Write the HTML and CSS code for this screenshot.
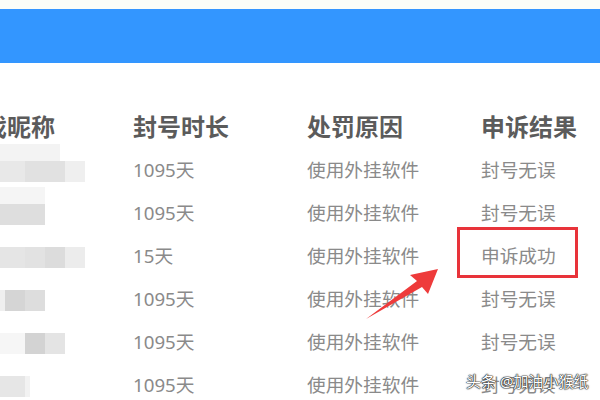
FILE: index.html
```html
<!DOCTYPE html>
<html lang="zh-CN">
<head>
    <meta charset="UTF-8" />
    <meta name="viewport" content="width=device-width, initial-scale=1.0" />
    <title>申诉结果</title>
    <link rel="stylesheet" href="styles.css">
</head>
<body>
    <div class="page">
        <div class="topline"></div>
        <div class="bar"></div>
        <div class="table">
            <div class="row head">
                <div class="cell">游戏昵称</div>
                <div class="cell">封号时长</div>
                <div class="cell">处罚原因</div>
                <div class="cell">申诉结果</div>
            </div>
            <div class="row">
                <div class="cell name">
                    <div class="blur tall wide">
                        <span class="px" style="width:25px;background:#e8e8e8"></span>
                        <span class="px" style="width:40px;background:#e1e1e1"></span>
                        <span class="px" style="width:20px;background:#efefef"></span>
                    </div>
                </div>
                <div class="cell">1095天</div>
                <div class="cell">使用外挂软件</div>
                <div class="cell">封号无误</div>
            </div>
            <div class="row">
                <div class="cell name">
                    <div class="blur tall">
                        <span class="px" style="width:45px;background:#dedede"></span>
                    </div>
                </div>
                <div class="cell">1095天</div>
                <div class="cell">使用外挂软件</div>
                <div class="cell">封号无误</div>
            </div>
            <div class="row">
                <div class="cell name">
                    <div class="blur">
                        <span class="px" style="width:25px;background:#e5e5e5"></span>
                        <span class="px" style="width:20px;background:#e2e2e2"></span>
                        <span class="px" style="width:20px;background:#dcdcdc"></span>
                        <span class="px" style="width:20px;background:#ececec"></span>
                    </div>
                </div>
                <div class="cell">15天</div>
                <div class="cell">使用外挂软件</div>
                <div class="cell">申诉成功</div>
            </div>
            <div class="row">
                <div class="cell name">
                    <div class="blur">
                        <span class="px" style="width:5px;background:#efefef"></span>
                        <span class="px" style="width:20px;background:#d5d5d5"></span>
                        <span class="px" style="width:20px;background:#dddddd"></span>
                    </div>
                </div>
                <div class="cell">1095天</div>
                <div class="cell">使用外挂软件</div>
                <div class="cell">封号无误</div>
            </div>
            <div class="row">
                <div class="cell name">
                    <div class="blur">
                        <span class="px" style="width:25px;background:#f6f6f6"></span>
                        <span class="px" style="width:20px;background:#d3d3d3"></span>
                        <span class="px" style="width:20px;background:#e4e4e4"></span>
                    </div>
                </div>
                <div class="cell">1095天</div>
                <div class="cell">使用外挂软件</div>
                <div class="cell">封号无误</div>
            </div>
            <div class="row">
                <div class="cell name">
                    <div class="blur">
                        <span class="px" style="width:25px;background:#e6e6e6"></span>
                        <span class="px" style="width:5px;background:#f2f2f2"></span>
                    </div>
                </div>
                <div class="cell">1095天</div>
                <div class="cell">使用外挂软件</div>
                <div class="cell">封号无误</div>
            </div>
        </div>

        <div class="mark"></div>
        <svg class="arrow" width="600" height="400" viewBox="0 0 600 400">
            <polygon points="438,269 410,275 417,281 366,319 422,287 428,294" fill="#ee3b3b" />
        </svg>
        <div class="watermark">头条 @加油小猴纸</div>
    </div>
</body>
</html>
```

FILE: styles.css
```css
body{
    margin: 0;
    background-color: #fff;
    font-family: "Noto Sans", "Noto Sans CJK SC", sans-serif;
}
.page{
    position: relative;
    width: 600px;
    height: 400px;
    overflow: hidden;
}
.topline{
    height: 9px;
    background-color: #fafdf8;
}
.bar{
    height: 54px;
    background-color: #3396ff;
}
.table{
    margin-left: -41px;
    padding-top: 40px;
}
.row{
    display: grid;
    grid-template-columns: 174px 174px 174px 174px;
    height: 43px;
    align-items: center;
    font-size: 18.7px;
    color: #8a8a8a;
}
.head{
    height: 44px;
    font-size: 24px;
    font-weight: bold;
    color: #5b5b5b;
}
.cell{
    white-space: nowrap;
}
.name{
    padding-left: 41px;
    align-self: stretch;
    display: flex;
    align-items: center;
}
.blur{
    display: flex;
    align-items: flex-end;
    height: 21px;
    margin-top: 6px;
}
.blur.tall{
    height: 38px;
    margin-top: -11px;
    background: linear-gradient(#f5f5f5, #f5f5f5) 0 0 / 45px 17px no-repeat;
}
.blur.wide{
    background: linear-gradient(#f3f3f3, #f3f3f3) 0 0 / 60px 17px no-repeat;
    border-top-right-radius: 6px;
}
.px{
    display: block;
    height: 21px;
}
.mark{
    position: absolute;
    left: 457px;
    top: 227px;
    width: 115px;
    height: 45px;
    border: 3px solid #e8333a;
}
.arrow{
    position: absolute;
    left: 0;
    top: 0;
}
.watermark{
    position: absolute;
    left: 466px;
    top: 370px;
    font-size: 15px;
    color: #fff;
    text-shadow: 0 0 1px #222, 0 0 1px #222, 0 0 1px #333, 0 0 2px #555;
}
```
